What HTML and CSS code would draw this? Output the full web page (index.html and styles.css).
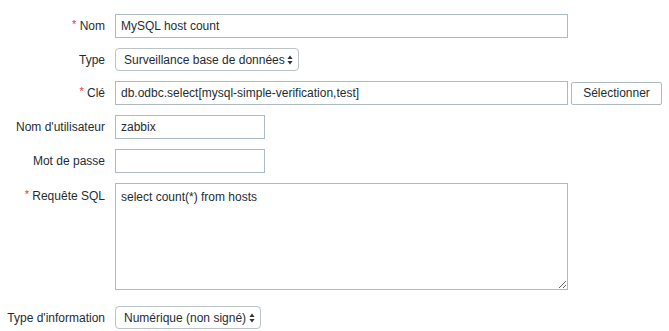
FILE: index.html
```html
<!DOCTYPE html>
<html lang="fr">
<head>
    <meta charset="UTF-8">
    <title>Élément - MySQL host count</title>
    <link rel="stylesheet" href="styles.css">
</head>
<body>
    <form class="form-list">
        <div class="form-row">
            <label class="form-label"><span class="required">*</span> Nom</label>
            <div class="form-field">
                <input type="text" class="input input-wide" value="MySQL host count">
            </div>
        </div>

        <div class="form-row">
            <label class="form-label">Type</label>
            <div class="form-field">
                <span class="select select-type">
                    <select><option>Surveillance base de données</option></select>
                    <svg class="select-arrow" width="6" height="10" viewBox="0 0 6 10"><path d="M3 0.5 L5.6 4 L0.4 4 Z M3 9.5 L5.6 6 L0.4 6 Z" fill="#333"/></svg>
                </span>
            </div>
        </div>

        <div class="form-row">
            <label class="form-label"><span class="required">*</span> Clé</label>
            <div class="form-field">
                <input type="text" class="input input-wide" value="db.odbc.select[mysql-simple-verification,test]">
                <button type="button" class="btn">Sélectionner</button>
            </div>
        </div>

        <div class="form-row">
            <label class="form-label">Nom d'utilisateur</label>
            <div class="form-field">
                <input type="text" class="input input-small" value="zabbix">
            </div>
        </div>

        <div class="form-row">
            <label class="form-label">Mot de passe</label>
            <div class="form-field">
                <input type="password" class="input input-small" value="">
            </div>
        </div>

        <div class="form-row form-row-area">
            <label class="form-label label-top"><span class="required">*</span> Requête SQL</label>
            <div class="form-field">
                <textarea class="textarea">select count(*) from hosts</textarea>
            </div>
        </div>

        <div class="form-row">
            <label class="form-label">Type d'information</label>
            <div class="form-field">
                <span class="select select-info">
                    <select><option>Numérique (non signé)</option></select>
                    <svg class="select-arrow" width="6" height="10" viewBox="0 0 6 10"><path d="M3 0.5 L5.6 4 L0.4 4 Z M3 9.5 L5.6 6 L0.4 6 Z" fill="#333"/></svg>
                </span>
            </div>
        </div>
    </form>
</body>
</html>
```

FILE: styles.css
```css
* {
    margin: 0;
    padding: 0;
    box-sizing: border-box;
}

body {
    font-family: 'Liberation Sans', Arial, sans-serif;
    font-size: 12px;
    color: #1f2c33;
    background: #fff;
}

.form-list {
    padding-top: 14px;
}

.form-row {
    display: flex;
    align-items: center;
    margin-bottom: 10px;
}

.form-row-area {
    align-items: flex-start;
    margin-bottom: 16px;
}

.form-label {
    width: 105px;
    flex-shrink: 0;
    text-align: right;
    margin-right: 10px;
    white-space: nowrap;
}

.label-top {
    padding-top: 6px;
}

.required {
    color: #e33734;
    font-size: 11px;
    position: relative;
    top: -2px;
}

.form-field {
    display: flex;
    align-items: center;
    gap: 3px;
}

.input {
    height: 24px;
    padding: 0 5px;
    border: 1px solid #acbbc2;
    border-radius: 0;
    font-family: inherit;
    font-size: 12px;
    color: #1f2c33;
    background: #fff;
    outline: none;
}

.input-wide {
    width: 453px;
}

.input-small {
    width: 150px;
}

.textarea {
    display: block;
    width: 453px;
    height: 107px;
    padding: 6px 5px 4px;
    border: 1px solid #acbbc2;
    font-family: inherit;
    font-size: 12px;
    color: #1f2c33;
    resize: both;
    outline: none;
}

.btn {
    height: 23px;
    width: 91px;
    border: 1px solid #acbbc2;
    border-radius: 2px;
    background: #fff;
    font-family: inherit;
    font-size: 12px;
    color: #1f2c33;
}

.select {
    display: inline-flex;
    align-items: center;
    height: 23px;
    border: 1px solid #b9c3c8;
    border-radius: 4px;
    background: #fff;
    padding-right: 5px;
}

.select select {
    appearance: none;
    -webkit-appearance: none;
    border: none;
    background: transparent;
    font-family: inherit;
    font-size: 12px;
    color: #1f2c33;
    padding-left: 8px;
    flex: 1;
    outline: none;
}

.select-type {
    width: 184px;
}

.select-info {
    width: 146px;
}

.select-arrow {
    flex-shrink: 0;
}
```
